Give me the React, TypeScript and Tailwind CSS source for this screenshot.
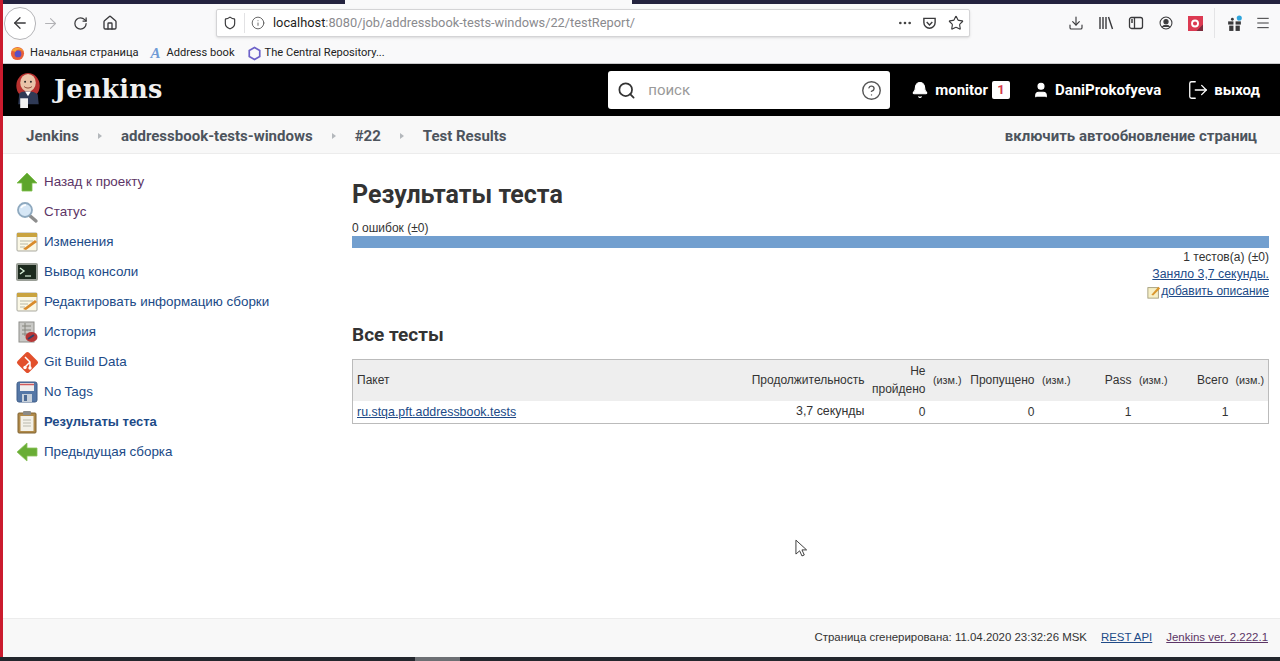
import { Bell, Download, Ellipsis, House, Info, LogOut, Menu, Search, Star, User, ArrowLeft, ArrowRight, RotateCw, Shield, CircleHelp } from 'lucide-react';

const roboto = "font-['Roboto',sans-serif]";

function Crumb({ label, last }: { label: string; last?: boolean }) {
  return (
    <div className="flex items-center">
      <span className="text-[15px] font-bold text-[#4d545d]">{label}</span>
      {!last && <span className="mx-[19px] h-0 w-0 border-y-[3px] border-l-[4px] border-y-transparent border-l-[#b4b8bc]" />}
    </div>
  );
}

function ArrowUpIcon() {
  return (
    <svg viewBox="0 0 24 24" className="h-6 w-6">
      <path d="M12 3 22 13H17V21H7V13H2Z" fill="#5da52c" stroke="#7fbf4d" strokeWidth="0.8" />
    </svg>
  );
}
function MagnifierIcon() {
  return (
    <svg viewBox="0 0 24 24" className="h-6 w-6">
      <path d="M14 15 21 21" stroke="#8d8d8d" strokeWidth="3.4" strokeLinecap="round" />
      <circle cx="10" cy="10" r="7" fill="#d6e7f6" stroke="#8ea9bf" strokeWidth="1.8" />
      <path d="M6 8c1-2 3-3 5-3" stroke="#fff" strokeWidth="1.6" fill="none" />
    </svg>
  );
}
function NotepadIcon() {
  return (
    <svg viewBox="0 0 24 24" className="h-6 w-6">
      <rect x="2" y="3" width="20" height="18" rx="1" fill="#fbf8e6" stroke="#a9a9a0" />
      <rect x="2" y="3" width="20" height="4" fill="#c9a33f" />
      <path d="M5 11H18M5 14H13M5 17H10" stroke="#b8b8a8" />
      <path d="M8 19 20 10 22 12 11 20Z" fill="#d98b2c" />
    </svg>
  );
}
function ConsoleIcon() {
  return (
    <svg viewBox="0 0 24 24" className="h-6 w-6">
      <rect x="1" y="3" width="22" height="18" rx="2" fill="#9a9f97" />
      <rect x="3" y="5" width="18" height="14" fill="#1c2a1e" />
      <path d="M5 8 9 11 5 14" stroke="#d8efd8" strokeWidth="1.4" fill="none" />
      <path d="M10 16H16" stroke="#d8efd8" strokeWidth="1.2" />
    </svg>
  );
}
function HistoryIcon() {
  return (
    <svg viewBox="0 0 24 24" className="h-6 w-6">
      <rect x="4" y="2" width="15" height="20" fill="#c9c9c6" stroke="#8e8e8a" />
      <path d="M7 6H16M7 10H16M7 14H12M10 3V16" stroke="#86867f" />
      <ellipse cx="16.5" cy="17" rx="6" ry="5" fill="#b73636" />
      <path d="M13 19 19 15" stroke="#30436a" strokeWidth="2" />
    </svg>
  );
}
function GitIcon() {
  return (
    <svg viewBox="0 0 24 24" className="h-6 w-6">
      <rect x="4.5" y="4.5" width="16" height="16" rx="2" transform="rotate(45 12.5 12.5)" fill="#e2502c" />
      <path d="M10 7 15 12V18M15 12 10 17V18" stroke="#fff" strokeWidth="1.5" fill="none" />
      <circle cx="15" cy="18" r="1.7" fill="#fff" />
      <circle cx="10" cy="17.5" r="1.7" fill="#fff" />
    </svg>
  );
}
function FloppyIcon() {
  return (
    <svg viewBox="0 0 24 24" className="h-6 w-6">
      <rect x="2" y="2" width="20" height="20" rx="2" fill="#5577a6" stroke="#3f5d88" />
      <rect x="5" y="3" width="14" height="8" fill="#f0eeee" />
      <path d="M5 4.5H19" stroke="#d0595b" strokeWidth="1.5" />
      <rect x="7" y="14" width="10" height="8" fill="#c7d0da" />
      <rect x="9" y="15" width="3" height="6" fill="#4d6a93" />
    </svg>
  );
}
function ClipboardIcon() {
  return (
    <svg viewBox="0 0 24 24" className="h-6 w-6">
      <rect x="3" y="3" width="18" height="20" rx="1" fill="#b08a4a" stroke="#806331" />
      <rect x="5.5" y="6" width="13" height="15" fill="#f3f1e8" />
      <path d="M8 10H16M8 13H16M8 16H16" stroke="#b9b9ad" />
      <rect x="8" y="1" width="8" height="4" rx="1" fill="#8b8b88" />
    </svg>
  );
}
function ArrowLeftIcon() {
  return (
    <svg viewBox="0 0 24 24" className="h-6 w-6">
      <path d="M2 12 12 3V8H22V16H12V21Z" fill="#69ad35" stroke="#8ac25c" strokeWidth="0.8" />
    </svg>
  );
}

const sideItems = [
  { label: 'Назад к проекту', icon: <ArrowUpIcon />, color: 'text-[#5c3566]' },
  { label: 'Статус', icon: <MagnifierIcon />, color: 'text-[#5c3566]' },
  { label: 'Изменения', icon: <NotepadIcon />, color: 'text-[#204a87]' },
  { label: 'Вывод консоли', icon: <ConsoleIcon />, color: 'text-[#204a87]' },
  { label: 'Редактировать информацию сборки', icon: <NotepadIcon />, color: 'text-[#204a87]' },
  { label: 'История', icon: <HistoryIcon />, color: 'text-[#204a87]' },
  { label: 'Git Build Data', icon: <GitIcon />, color: 'text-[#204a87]' },
  { label: 'No Tags', icon: <FloppyIcon />, color: 'text-[#204a87]' },
  { label: 'Результаты теста', icon: <ClipboardIcon />, color: 'text-[#204a87] font-bold text-[13px]' },
  { label: 'Предыдущая сборка', icon: <ArrowLeftIcon />, color: 'text-[#204a87]' },
];

function Izm() {
  return <span className="text-[10.8px] text-[#333]">(изм.)</span>;
}

export default function App() {
  return (
    <div className="flex h-[661px] w-full flex-col overflow-hidden bg-white font-['Liberation_Sans',sans-serif] text-[12px] text-[#333]">
      <div className="flex min-h-0 flex-1">
        <div className="w-[3px] shrink-0 bg-[#cb1b2e]" />
        <div className="flex min-w-0 flex-1 flex-col">
          {/* tab strip */}
          <div className="flex h-[4px] shrink-0">
            <div className="w-[342px] bg-[#24233f]" />
            <div className="w-[287px] bg-[#f9f9fa]" />
            <div className="flex-1 bg-[#24233f]" />
          </div>

          {/* browser toolbar */}
          <div className="flex h-[38px] shrink-0 items-center bg-[#f9f9fa] text-[#3a3a3c]">
            <div className="ml-[1px] flex h-[33px] w-[32px] items-center justify-center rounded-full border border-[#b5b5b8] bg-white">
              <ArrowLeft size={18} strokeWidth={1.7} />
            </div>
            <ArrowRight size={17} strokeWidth={1.5} className="ml-[6px] text-[#b3b3b6]" />
            <RotateCw size={15} strokeWidth={2} className="ml-[14px]" />
            <House size={16} strokeWidth={2} className="ml-[14px]" />
            <div className="ml-[98px] flex h-[28px] w-[754px] items-center rounded-[2px] border border-[#d4d4d6] bg-white shadow-sm">
              <Shield size={14} strokeWidth={2} className="ml-[6px]" />
              <div className="ml-[7px] h-[20px] w-px bg-[#e2e2e4]" />
              <Info size={14} strokeWidth={1.5} className="ml-[6px] text-[#555]" />
              <span className={`ml-[8px] text-[12.8px] text-[#8a8a8e] ${roboto}`}>
                <span className="text-[#1f1f22]">localhost</span>:8080/job/addressbook-tests-windows/22/testReport/
              </span>
              <div className="flex-1" />
              <Ellipsis size={16} className="text-[#444]" />
              <svg viewBox="0 0 16 16" className="ml-[9px] h-[15px] w-[15px]" fill="none" stroke="#3a3a3c" strokeWidth="1.5">
                <path d="M2 2.5H14V7A6 6 0 0 1 2 7Z" />
                <path d="M5 6.5 8 9.5 11 6.5" />
              </svg>
              <Star size={16} strokeWidth={1.7} className="ml-[11px] mr-[5px]" />
            </div>
            <Download size={16} strokeWidth={1.7} className="ml-[98px]" />
            <svg viewBox="0 0 16 16" className="ml-[14px] h-[16px] w-[16px]" fill="none" stroke="#3a3a3c" strokeWidth="1.4">
              <path d="M2 2V14M5 2V14M8 2V14M10.5 2 14.5 14" />
            </svg>
            <svg viewBox="0 0 16 16" className="ml-[14px] h-[16px] w-[16px]" fill="none" stroke="#3a3a3c" strokeWidth="1.3">
              <rect x="1.5" y="2.5" width="13" height="11" rx="2" />
              <path d="M6.5 2.5V13.5M3 5H5M3 7H5" />
            </svg>
            <svg viewBox="0 0 16 16" className="ml-[15px] h-[14px] w-[14px]" fill="none" stroke="#3a3a3c" strokeWidth="1.2">
              <circle cx="8" cy="8" r="6.8" />
              <circle cx="8" cy="6.5" r="2.4" fill="#3a3a3c" />
              <path d="M3.8 12.5C5 10 11 10 12.2 12.5" fill="#3a3a3c" />
            </svg>
            <svg viewBox="0 0 16 16" className="ml-[15px] h-[15px] w-[15px]">
              <rect width="16" height="16" fill="#dc3a52" />
              <path d="M16 9V16H9Z" fill="#7d2b3d" />
              <circle cx="7.5" cy="8" r="3.2" fill="none" stroke="#fff" strokeWidth="2" />
            </svg>
            <div className="ml-[11px] h-[30px] w-px bg-[#e4e4e6]" />
            <svg viewBox="0 0 16 16" className="ml-[11px] h-[17px] w-[17px]">
              <rect x="2" y="6" width="5" height="3" fill="#3a3a3c" />
              <rect x="9" y="6" width="5" height="3" fill="#3a3a3c" />
              <rect x="3" y="10" width="4" height="5" fill="#3a3a3c" />
              <rect x="9" y="10" width="4" height="5" fill="#3a3a3c" />
              <circle cx="6" cy="4" r="1.3" fill="#3a3a3c" />
              <circle cx="12.5" cy="2.8" r="2.4" fill="#2fa5dc" />
            </svg>
            <Menu size={16} strokeWidth={1.5} className="ml-[12px]" />
          </div>

          {/* bookmarks */}
          <div className={`flex h-[22px] shrink-0 items-center border-b border-[#c9c9cb] bg-[#f9f9fa] pt-[1px] pl-[7px] text-[11.1px] text-[#222] ${roboto}`}>
            <svg viewBox="0 0 16 16" className="h-[15px] w-[15px]">
              <circle cx="8" cy="8" r="7" fill="#e8603a" />
              <circle cx="8.5" cy="8.5" r="3.6" fill="#5a4fc4" />
              <path d="M2 5C5 0 13 1 15 7 12 3 7 3 6 6Z" fill="#f4a732" />
            </svg>
            <span className="ml-[5px]">Начальная страница</span>
            <span className="ml-[12px] font-['Liberation_Serif',serif] text-[15px] font-bold italic text-[#6f9bd6]">A</span>
            <span className="ml-[6px]">Address book</span>
            <svg viewBox="0 0 16 16" className="ml-[12px] h-[15px] w-[15px]" fill="none" stroke="#6d62c9" strokeWidth="1.8">
              <path d="M8 1.5 13.6 4.7V11.3L8 14.5 2.4 11.3V4.7Z" />
            </svg>
            <span className="ml-[3px]">The Central Repository...</span>
          </div>

          {/* jenkins header */}
          <header className="flex h-[52px] shrink-0 items-center bg-black pr-[20px]">
            <svg viewBox="0 0 28 38" className="ml-[11px] h-[37px] w-[28px]">
              <ellipse cx="14" cy="14" rx="12" ry="13" fill="#b8312f" />
              <ellipse cx="14" cy="11" rx="8" ry="9" fill="#e9c3a8" />
              <path d="M5 22C8 19 20 19 24 23L25 33H4Z" fill="#2f3a56" />
              <path d="M11 20 14 25 17 20Z" fill="#fff" />
              <rect x="6" y="27" width="8" height="10" fill="#f2f2f2" />
              <circle cx="11" cy="10" r="1" fill="#222" />
              <circle cx="17" cy="10" r="1" fill="#222" />
              <path d="M10 15C12 17 16 17 18 15" stroke="#8e4a3a" fill="none" />
            </svg>
            <span className="ml-[12px] font-['DejaVu_Serif',serif] text-[25.5px] leading-none font-bold tracking-[0.2px] text-[#f0f0f0]">Jenkins</span>
            <div className="flex-1" />
            <div className="flex h-[38px] w-[282px] items-center rounded-[3px] bg-white">
              <Search size={19} strokeWidth={2.2} className="ml-[9px] text-[#333]" />
              <span className={`ml-[12px] flex-1 text-[15px] text-[#9a9a9a] ${roboto}`}>поиск</span>
              <CircleHelp size={21} strokeWidth={1.6} className="mr-[8px] text-[#555]" />
            </div>
            <div className={`flex items-center text-[15px] font-bold text-white ${roboto}`}>
              <Bell size={18} fill="white" strokeWidth={1.5} className="ml-[21px]" />
              <span className="ml-[6px]">monitor</span>
              <span className="ml-[4px] flex h-[18px] w-[18px] items-center justify-center rounded-[2px] bg-white text-[13px] text-[#d5394c]">1</span>
              <User size={18} fill="white" strokeWidth={1.5} className="ml-[22px]" />
              <span className="ml-[5px]">DaniProkofyeva</span>
              <LogOut size={22} strokeWidth={1.4} className="ml-[26px]" />
              <span className="ml-[5px]">выход</span>
            </div>
          </header>

          {/* breadcrumbs */}
          <div className={`flex h-[38px] shrink-0 items-center border-b border-[#ececec] bg-[#f8f8f8] pt-[3px] pr-[23px] pl-[23px] ${roboto}`}>
            <Crumb label="Jenkins" />
            <Crumb label="addressbook-tests-windows" />
            <Crumb label="#22" />
            <Crumb label="Test Results" last />
            <div className="flex-1" />
            <span className="text-[15px] font-bold text-[#4d545d]">включить автообновление страниц</span>
          </div>

          <div className="flex min-h-0 flex-1">
            {/* side panel */}
            <aside className="flex w-[349px] shrink-0 flex-col pt-[13px] pl-[12px] text-[13.4px]">
              {sideItems.map((item) => (
                <div key={item.label} className="flex h-[30px] items-center">
                  <div className="w-[29px] shrink-0">{item.icon}</div>
                  <span className={item.color}>{item.label}</span>
                </div>
              ))}
            </aside>

            {/* main panel */}
            <main className="min-w-0 flex-1 pr-[11px]">
              <h1 className={`mt-[24px] text-[25px] leading-[34px] font-bold text-[#333] ${roboto}`}>Результаты теста</h1>
              <div className="mt-[9px] leading-[14px]">0 ошибок (±0)</div>
              <div className="mt-[1px] h-[12px] bg-[#729fcf]" />
              <div className="mt-[1px] text-right leading-[17px]">
                <div>1 тестов(а) (±0)</div>
                <div><a className="text-[12.3px] text-[#204a87] underline">Заняло 3,7 секунды.</a></div>
                <div className="flex items-center justify-end">
                  <svg viewBox="0 0 16 16" className="h-[14px] w-[14px]">
                    <rect x="1" y="3" width="12" height="12" fill="#f6efc6" stroke="#a09a77" />
                    <path d="M5 11 13 2 15 4 7 12Z" fill="#d9962e" />
                  </svg>
                  <a className="text-[#204a87] underline">добавить описание</a>
                </div>
              </div>
              <h2 className={`mt-[22px] text-[19px] leading-[26px] font-bold text-[#333] ${roboto}`}>Все тесты</h2>
              <table className="mt-[11px] w-full table-fixed border-collapse border border-[#bbb]">
                <colgroup>
                  <col className="w-[398px]" />
                  <col className="w-[118px]" />
                  <col className="w-[61px]" />
                  <col className="w-[36px]" />
                  <col className="w-[73px]" />
                  <col className="w-[36px]" />
                  <col className="w-[61px]" />
                  <col className="w-[36px]" />
                  <col className="w-[61px]" />
                  <col />
                </colgroup>
                <thead>
                  <tr className="h-[41px] bg-[#eee] text-right font-normal">
                    <th className="pl-[4px] text-left font-normal">Пакет</th>
                    <th className="pr-[4px] font-normal">Продолжительность</th>
                    <th className="pr-[4px] leading-[18px] font-normal">Не пройдено</th>
                    <th className="pr-[4px] font-normal"><Izm /></th>
                    <th className="pr-[4px] font-normal">Пропущено</th>
                    <th className="pr-[4px] font-normal"><Izm /></th>
                    <th className="pr-[4px] font-normal">Pass</th>
                    <th className="pr-[4px] font-normal"><Izm /></th>
                    <th className="pr-[4px] font-normal">Всего</th>
                    <th className="pr-[4px] font-normal"><Izm /></th>
                  </tr>
                </thead>
                <tbody>
                  <tr className="h-[23px] text-right">
                    <td className="pt-[1px] pl-[4px] text-left text-[12.4px]"><a className="text-[#204a87] underline">ru.stqa.pft.addressbook.tests</a></td>
                    <td className="pr-[4px] text-[12.4px]">3,7 секунды</td>
                    <td className="pr-[4px]">0</td>
                    <td />
                    <td className="pr-[4px]">0</td>
                    <td />
                    <td className="pr-[4px]">1</td>
                    <td />
                    <td className="pr-[4px]">1</td>
                    <td />
                  </tr>
                </tbody>
              </table>
            </main>
          </div>

          {/* footer */}
          <footer className="flex h-[39px] shrink-0 items-center justify-end border-t border-[#ececec] bg-[#f8f8f8] pr-[12px] text-[11.45px]">
            <span>Страница сгенерирована: 11.04.2020 23:32:26 MSK</span>
            <a className="ml-[14px] text-[#204a87] underline">REST API</a>
            <a className="ml-[14px] text-[#5c3566] underline">Jenkins ver. 2.222.1</a>
          </footer>
        </div>
      </div>

      {/* taskbar edge */}
      <div className="flex h-[4px] shrink-0 bg-[#23272d]">
        <div className="w-[415px]" />
        <div className="w-[45px] bg-[#6d7074]" />
      </div>

      {/* mouse pointer */}
      <svg viewBox="0 0 14 20" className="absolute top-[539px] left-[795px] h-[19px] w-[13px]">
        <path d="M1 1V16L5 12.5 7.5 18 10 17 7.5 11.5H12.5Z" fill="#fff" stroke="#333" />
      </svg>
    </div>
  );
}
